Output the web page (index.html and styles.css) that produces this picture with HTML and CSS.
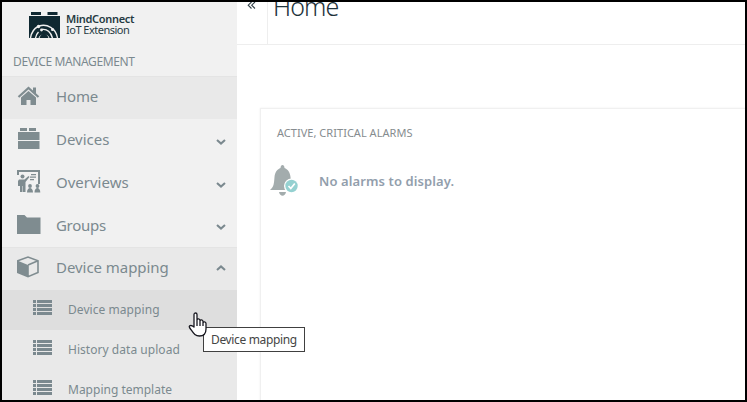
FILE: index.html
```html
<!DOCTYPE html>
<html lang="en">
<head>
<meta charset="utf-8">
<title>Device management</title>
<link rel="stylesheet" href="styles.css">
</head>
<body>
<svg class="defs" width="0" height="0">
  <symbol id="down" viewBox="0 0 10 6"><path d="M1 1l4 3.500L9 1" fill="none" stroke="currentColor" stroke-width="2.100"/></symbol>
  <symbol id="list" viewBox="0 0 20 16"><path d="M0 0h3v3H0zM4 0h15v3H4zM0 4h3v3H0zM4 4h15v3H4zM0 8h3v3H0zM4 8h15v3H4zM0 12h3v3H0zM4 12h15v3H4z" fill="currentColor"/></symbol>
</svg>
<div class="app">
  <nav class="sidebar">
    <div class="brand">
      <svg class="logo" width="32" height="27" viewBox="0 0 32 27">
        <path d="M2 0h10v3H2zM18.500 0h10v3h-10zM0 4h31v22H0z" fill="#0f2831"/>
        <path d="M1.500 26C2.500 20 5 16.500 9 14.500M10 14c8-2.500 17 2 18.500 12M6.500 26c.5-3 1.500-4.500 3-6M13 17.500c5-1 9 3 10.500 8.500" fill="none" stroke="#f1f1f1" stroke-width="1.400"/>
        <path d="M9.500 26c2-5 9-5 11 0z" fill="#f1f1f1"/><path d="M10.500 26c2-6 7-6 9 0z" fill="#0f2831"/>
        <circle cx="9.500" cy="14.500" r="1.700" fill="#f1f1f1"/><circle cx="23.500" cy="17.500" r="1.500" fill="#f1f1f1"/><circle cx="12.500" cy="18" r="1.400" fill="#f1f1f1"/>
      </svg>
      <div class="brand-text"><b>MindConnect</b><span>IoT Extension</span></div>
    </div>
    <div class="app-name"><span>DEVICE MANAGEMENT</span></div>
    <a class="item active">
      <svg class="icon" width="24" height="22" viewBox="0 0 24 22"><path d="M1.500 12L11.500 3l10 9" fill="none" stroke="currentColor" stroke-width="2.200"/><path d="M16 2.500h3v6.500l-3-2.500zM4 12.500l7.500-6.500 7.500 6.500V20h-5.500v-5h-4v5H4z" fill="currentColor"/></svg>
      <span class="label home">Home</span>
    </a>
    <a class="item">
      <svg class="icon" width="24" height="22" viewBox="0 0 24 22"><path d="M3 0h7v3H3zM12 0h7v3h-7zM1 4h21.500v8H1zM1 13h21.500v8H1z" fill="currentColor"/></svg>
      <span class="label devices">Devices</span><svg class="chev" width="10" height="6"><use href="#down"/></svg>
    </a>
    <a class="item">
      <svg class="icon" width="24" height="24" viewBox="0 0 24 24"><path d="M0 0h23v14h-2V2H2v3H0z" fill="currentColor"/><circle cx="5.500" cy="6.500" r="2" fill="currentColor"/><path d="M2 9.500h5.500l4-3.500 1 1L8.500 12v10H6v-6h-.5v6H3v-6H1v-5zM14 4h5v1.200h-5zM13 6.500h6v1.200h-6zM13 9h4v1.200h-4zM10 22.500c0-6 6-6 6 0zM17.500 22.500c0-6 5.800-6 5.800 0z" fill="currentColor"/><circle cx="13" cy="16" r="1.900" fill="currentColor"/><circle cx="20.500" cy="16" r="1.900" fill="currentColor"/></svg>
      <span class="label overviews">Overviews</span><svg class="chev" width="10" height="6"><use href="#down"/></svg>
    </a>
    <a class="item last">
      <svg class="icon" width="24" height="20" viewBox="0 0 24 20"><path d="M0 0h7.500l2.500 2.500H23.500V19H0z" fill="currentColor"/></svg>
      <span class="label groups">Groups</span><svg class="chev" width="10" height="6"><use href="#down"/></svg>
    </a>
    <a class="item open">
      <svg class="icon" width="24" height="22" viewBox="0 0 24 22"><path d="M.8 4.700L11 1l10 3.700V16.500L11 20.700.8 16.500zM11 9l10-4.300M11 9v11.500" fill="none" stroke="currentColor" stroke-width="1.600"/><path d="M.8 4.700L11 9v11.500L.8 16.500z" fill="currentColor"/></svg>
      <span class="label mapping">Device mapping</span><svg class="chev up" width="10" height="6"><use href="#down"/></svg>
    </a>
    <a class="sub selected"><svg class="list" width="20" height="16"><use href="#list"/></svg><span class="s1">Device mapping</span></a>
    <a class="sub"><svg class="list" width="20" height="16"><use href="#list"/></svg><span class="s2">History data upload</span></a>
    <a class="sub"><svg class="list" width="20" height="16"><use href="#list"/></svg><span class="s3">Mapping template</span></a>
  </nav>
  <main class="content">
    <header class="topbar">
      <div class="toggle"><svg width="9" height="8" viewBox="0 0 9 8"><path d="M4.500 0L1.200 3.200l3.300 3.300M8 0L4.700 3.200 8 6.500" fill="none" stroke="#36454c" stroke-width="1.100"/></svg></div>
      <h1>Home</h1>
    </header>
    <section class="card">
      <h2><span>ACTIVE, CRITICAL ALARMS</span></h2>
      <div class="empty">
        <svg width="29" height="32" viewBox="0 0 29 32"><path d="M0 25c4-3 4-7 4.500-13 .4-5 3-8 6-9 0-4 4-4 4 0 3 1 5.600 4 6 9 .5 6 1 10 5 13z" fill="#a3acad"/><path d="M9 27h7c-1 5-6 5-7 0z" fill="#a3acad"/><circle cx="21.500" cy="21" r="7.500" fill="#fff"/><circle cx="21.500" cy="21" r="6.200" fill="#95d1d1"/><path d="M18.500 21l2.300 2.500 4-5" fill="none" stroke="#fff" stroke-width="1.700"/></svg>
        <strong>No alarms to display.</strong>
      </div>
    </section>
  </main>
  <div class="tooltip"><span>Device mapping</span></div>
  <svg class="cursor" width="20" height="25" viewBox="0 0 20 25"><path d="M6 15V2.500c0-2 3-2 3 0V8c0-1.500 3-1.500 3 .5V9c0-1.500 3-1.500 3 .5V11c0-1.500 3-1.500 3 .5V17c0 4-2 7-6.500 7-5 0-6-3-10-8.500C.5 13.500 3 12.500 6 15zM9 8v6M12 9v5M15 10v4" fill="#fff" stroke="#17171f" stroke-width="1.300" stroke-linejoin="round"/></svg>
</div>
</body>
</html>
```
FILE: styles.css
```css
* { box-sizing: border-box; }
body { margin: 0; font-family: "Noto Sans", sans-serif; color: #7b898f; }
.defs { position: absolute; }
.app { position: relative; display: flex; width: 747px; height: 402px; border: 2px solid #000; background: #fff; overflow: hidden; white-space: nowrap; }
.sidebar { width: 235px; height: 398px; flex: none; background: #f1f1f1; overflow: hidden; }
.brand { display: flex; height: 48px; padding: 10px 0 0 27px; }
.brand-text { display: flex; flex-direction: column; margin: 1px 0 0 5px; font-size: 11px; line-height: 11px; color: #263b43; }
.brand-text b { font-weight: 600; letter-spacing: -0.3px; }
.brand-text span { letter-spacing: -0.5px; }
.app-name { height: 26px; padding: 3px 0 0 11px; font-size: 12px; line-height: 18px; letter-spacing: -0.37px; }
.item { display: flex; align-items: center; height: 43px; padding: 0 11px 3px 15px; }
.active, .open { background: #e9e9e9; box-shadow: inset 0 1px #e4e4e4; }
.active .icon { margin-top: -1px; }
.last { height: 42px; }
.icon { flex: none; color: #7f8c90; }
.label { margin-left: 15px; font-size: 15px; line-height: 22px; }
.home { letter-spacing: -0.15px; }
.groups { letter-spacing: -0.3px; }
.mapping { letter-spacing: -0.05px; }
.chev { margin-left: auto; margin-top: 5px; }
.up { transform: rotate(180deg); margin-top: 2px; }
.sub { display: flex; align-items: center; height: 40px; padding: 0 0 2px 31px; background: #e9e9e9; font-size: 12px; }
.sub.selected { background: #dedede; }
.list { margin: -3px 15px 0 0; }
.s1 { letter-spacing: 0.06px; }
.s2 { letter-spacing: 0.04px; }
.content { flex: 1; }
.topbar { display: flex; height: 43px; border-bottom: 1px solid #eee; }
.toggle { width: 31px; padding-left: 10px; border-right: 1px solid #eee; line-height: 0; }
h1 { height: 34px; margin: -13px 0 0 5px; font-size: 25px; line-height: 34px; font-weight: 300; letter-spacing: -0.9px; color: #1d323b; }
.card { height: 310px; margin: 63px 0 0 23px; border: 1px solid #f0f0f0; border-right: 0; box-shadow: 0 0 2px #eee; }
h2 { margin: 16px 0 0 16px; font-size: 11px; line-height: 16px; font-weight: 400; color: #868c8f; letter-spacing: 0.03px; }
.empty { display: flex; align-items: center; margin: 24px 0 0 9px; color: #929eac; font-size: 13px; }
strong { margin-left: 20px; font-weight: 600; letter-spacing: 0.1px; }
.tooltip { position: absolute; left: 201px; top: 325px; width: 102px; height: 25px; padding-left: 7px; border: 1px solid #404040; background: #fff; color: #454545; font-size: 12px; line-height: 23px; letter-spacing: -0.35px; }
.cursor { position: absolute; left: 186px; top: 310px; }
```
